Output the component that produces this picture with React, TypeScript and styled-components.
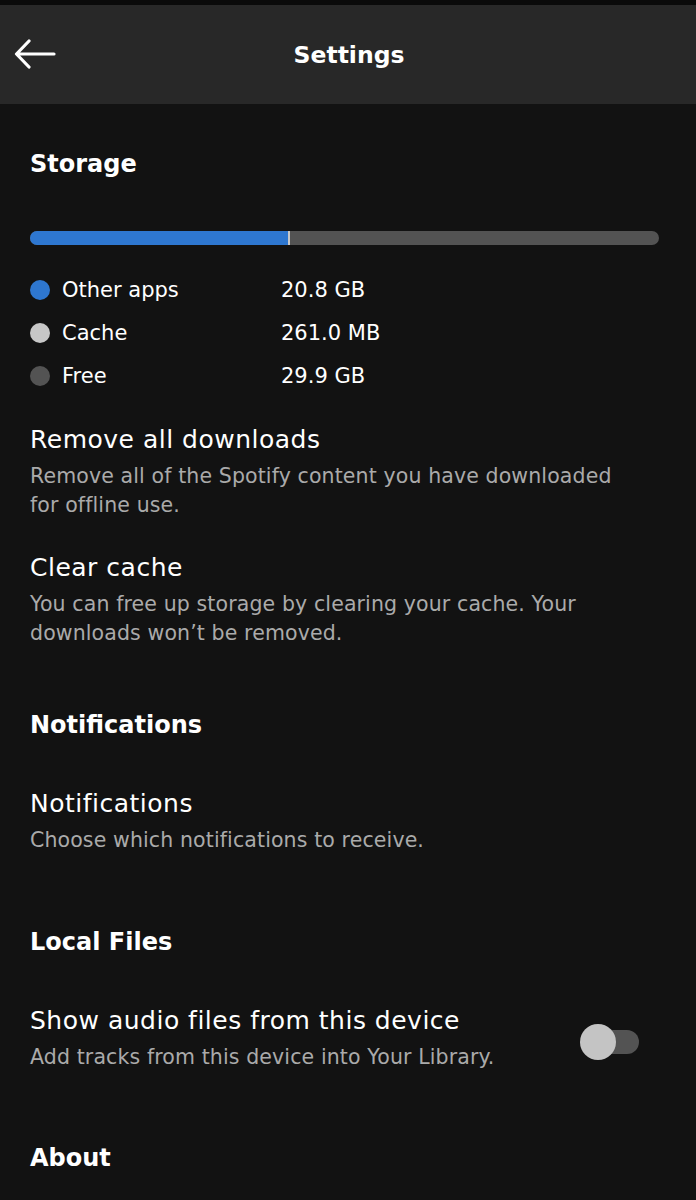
import styled, { createGlobalStyle } from 'styled-components';

const GlobalStyle = createGlobalStyle`
  html, body {
    margin: 0;
    padding: 0;
    background: #121212;
  }
  body {
    font-family: "DejaVu Sans", Inter, "Liberation Sans", sans-serif;
    color: #fff;
    -webkit-font-smoothing: antialiased;
  }
`;

const storage = [
  { label: 'Other apps', value: '20.8 GB', color: '#2e77d0' },
  { label: 'Cache', value: '261.0 MB', color: '#c7c7c7' },
  { label: 'Free', value: '29.9 GB', color: '#535353' },
];

function BackArrow() {
  return (
    <svg width="42" height="30" viewBox="0 0 42 30" fill="none">
      <path
        d="M40 15H3M15 2L2.5 15L15 28"
        stroke="#fff"
        strokeWidth="3.2"
        strokeLinecap="round"
        strokeLinejoin="round"
      />
    </svg>
  );
}

function App() {
  return (
    <Page>
      <GlobalStyle />
      <StatusStrip />
      <Header>
        <BackButton>
          <BackArrow />
        </BackButton>
        <HeaderTitle>Settings</HeaderTitle>
      </Header>

      <Content>
        <SectionTitle>Storage</SectionTitle>
        <StorageBar>
          <BarFill $width={41} />
          <BarMarker />
        </StorageBar>
        <Legend>
          {storage.map((s) => (
            <LegendRow key={s.label}>
              <Dot $color={s.color} />
              <LegendLabel>{s.label}</LegendLabel>
              <LegendValue>{s.value}</LegendValue>
            </LegendRow>
          ))}
        </Legend>

        <Item $top={33}>
          <ItemTitle>Remove all downloads</ItemTitle>
          <ItemText>
            Remove all of the Spotify content you have downloaded for offline use.
          </ItemText>
        </Item>
        <Item>
          <ItemTitle>Clear cache</ItemTitle>
          <ItemText>
            You can free up storage by clearing your cache. Your downloads won’t be removed.
          </ItemText>
        </Item>

        <SectionTitle $top={61}>Notifications</SectionTitle>
        <Item $top={47}>
          <ItemTitle>Notifications</ItemTitle>
          <ItemText>Choose which notifications to receive.</ItemText>
        </Item>

        <SectionTitle $top={71}>Local Files</SectionTitle>
        <ToggleItem>
          <Item $top={0}>
            <ItemTitle>Show audio files from this device</ItemTitle>
            <ItemText>Add tracks from this device into Your Library.</ItemText>
          </Item>
          <Toggle>
            <ToggleKnob />
          </Toggle>
        </ToggleItem>

        <SectionTitle $top={70}>About</SectionTitle>
      </Content>
    </Page>
  );
}

export default App;

const Page = styled.div`
  width: 696px;
  min-height: 1200px;
  background: #121212;
  overflow: hidden;
`;

const StatusStrip = styled.div`
  height: 5px;
  background: #0a0a0a;
`;

const Header = styled.header`
  position: relative;
  height: 99px;
  background: #282828;
  display: flex;
  align-items: center;
  justify-content: center;
`;

const BackButton = styled.button`
  position: absolute;
  left: 14px;
  top: 34px;
  padding: 0;
  border: 0;
  background: none;
  display: flex;
`;

const HeaderTitle = styled.h1`
  margin: 0;
  font-size: 23.5px;
  font-weight: 700;
  color: #fff;
  padding-left: 2px;
`;

const Content = styled.main`
  padding: 44px 30px 40px 30px;
  display: flex;
  flex-direction: column;
`;

const SectionTitle = styled.h2<{ $top?: number }>`
  margin: ${(p) => p.$top ?? 0}px 0 0 0;
  font-size: 24px;
  line-height: 32px;
  font-weight: 700;
  color: #fff;
`;

const StorageBar = styled.div`
  position: relative;
  margin-top: 51px;
  width: 629px;
  height: 14px;
  border-radius: 7px;
  background: #535353;
  overflow: hidden;
`;

const BarFill = styled.div<{ $width: number }>`
  width: ${(p) => p.$width}%;
  height: 100%;
  background: #2e77d0;
`;

const BarMarker = styled.div`
  position: absolute;
  left: 41%;
  top: 0;
  width: 2px;
  height: 100%;
  background: #c7c7c7;
`;

const Legend = styled.div`
  margin-top: 30px;
  display: flex;
  flex-direction: column;
  gap: 13px;
`;

const LegendRow = styled.div`
  display: grid;
  grid-template-columns: 20px 207px 1fr;
  column-gap: 12px;
  align-items: center;
  height: 30px;
`;

const Dot = styled.span<{ $color: string }>`
  width: 20px;
  height: 20px;
  border-radius: 50%;
  background: ${(p) => p.$color};
`;

const LegendLabel = styled.span`
  font-size: 21px;
  color: #fff;
`;

const LegendValue = styled.span`
  font-size: 21px;
  color: #fff;
`;

const Item = styled.div<{ $top?: number }>`
  margin-top: ${(p) => p.$top ?? 32}px;
  display: flex;
  flex-direction: column;
  gap: 6px;
`;

const ItemTitle = styled.div`
  font-size: 25px;
  line-height: 32px;
  letter-spacing: 0.5px;
  color: #fff;
`;

const ItemText = styled.div`
  font-size: 20.5px;
  line-height: 29px;
  letter-spacing: 0.12px;
  color: #aaaaaa;
  max-width: 610px;
`;

const ToggleItem = styled.div`
  margin-top: 47px;
  display: flex;
  align-items: center;
  justify-content: space-between;
  padding-right: 27px;
`;

const Toggle = styled.div`
  position: relative;
  width: 44px;
  height: 24px;
  border-radius: 12px;
  background: #535353;
  margin-top: 6px;
`;

const ToggleKnob = styled.span`
  position: absolute;
  left: -15px;
  top: -6px;
  width: 36px;
  height: 36px;
  border-radius: 50%;
  background: #c4c4c4;
`;
